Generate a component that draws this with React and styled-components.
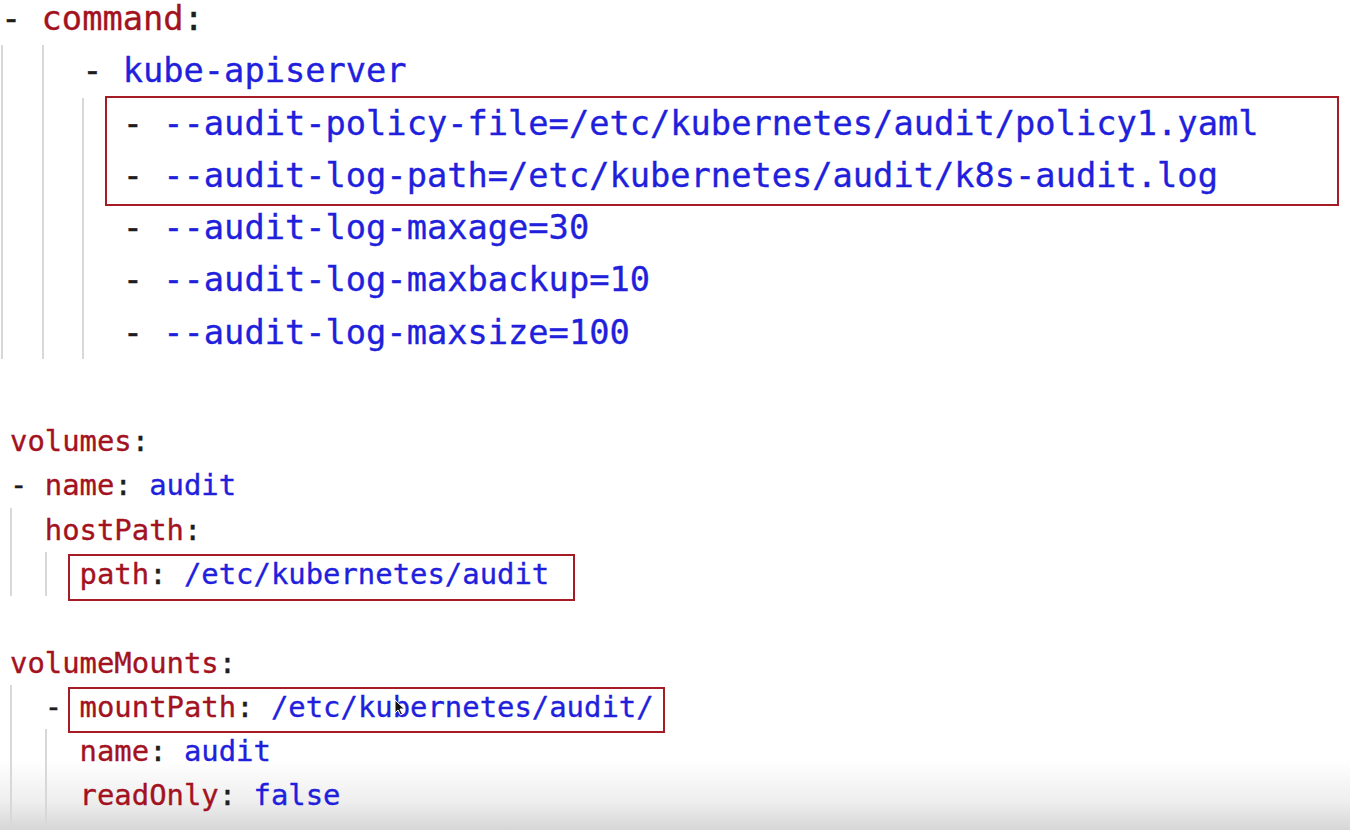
import React from "react";
import styled, { createGlobalStyle } from "styled-components";

const Global = createGlobalStyle`
  html, body { margin: 0; padding: 0; background: #ffffff; }
  #root { width: 1350px; height: 830px; }
`;

const Page = styled.div`
  position: relative;
  width: 1350px;
  height: 830px;
  overflow: hidden;
  background: #ffffff;
`;

const Block = styled.div`
  position: relative;
  z-index: 1;
  font-family: "DejaVu Sans Mono", "Liberation Mono", monospace;
  font-size: ${(p) => p.$size}px;
  line-height: ${(p) => p.$lh}px;
  padding-left: ${(p) => p.$pad}px;
  margin-top: ${(p) => p.$mt}px;
  white-space: pre;
  color: #222222;
  -webkit-text-stroke: 0.35px currentColor;
`;

const Line = styled.div`
  display: flex;
  align-items: stretch;
`;

const Indent = styled.span`
  display: inline-block;
  width: 2ch;
  flex: none;
  box-shadow: ${(p) => (p.$guide ? "inset 2px 0 0 #d8d8d8" : "none")};
`;

const Dash = styled.span`
  color: #1e1e1e;
`;

const Key = styled.span`
  color: #a3121f;
`;

const Val = styled.span`
  color: #1f1fdc;
`;

const Colon = styled.span`
  color: #1e1e1e;
`;

const Highlight = styled.div`
  position: relative;
  &::after {
    content: "";
    position: absolute;
    left: ${(p) => p.$left}px;
    width: ${(p) => p.$width}px;
    top: ${(p) => p.$top}px;
    bottom: ${(p) => p.$bottom}px;
    border: 2px solid #a51b26;
    box-sizing: border-box;
    pointer-events: none;
  }
`;

const Cursor = styled.svg`
  position: absolute;
  z-index: 2;
  left: 394px;
  top: 699px;
  width: 12px;
  height: 17px;
`;

const Fade = styled.div`
  position: absolute;
  z-index: 0;
  left: 0;
  right: 0;
  bottom: 0;
  height: 70px;
  pointer-events: none;
  background: linear-gradient(
    to bottom,
    rgba(255, 255, 255, 0) 0%,
    rgba(238, 238, 238, 1) 60%,
    rgba(214, 214, 214, 1) 100%
  );
`;

const Guides = ({ n }) =>
  Array.from({ length: n }).map((_, i) => <Indent key={i} $guide />);

const Row = ({ guides = 0, children }) => (
  <Line>
    <Guides n={guides} />
    <span>{children}</span>
  </Line>
);

const argRows = [
  "--audit-log-maxage=30",
  "--audit-log-maxbackup=10",
  "--audit-log-maxsize=100",
];

export default function App() {
  return (
    <Page>
      <Global />
      <Fade />
      <Block $size={33.7} $lh={52.3} $pad={1} $mt={-7}>
        <Row>
          <Dash>- </Dash>
          <Key>command</Key>
          <Colon>:</Colon>
        </Row>
        <Row guides={2}>
          <Dash>- </Dash>
          <Val>kube-apiserver</Val>
        </Row>
        <Highlight $left={104} $width={1234} $top={-2} $bottom={-4}>
          <Row guides={3}>
            <Dash>- </Dash>
            <Val>--audit-policy-file=/etc/kubernetes/audit/policy1.yaml</Val>
          </Row>
          <Row guides={3}>
            <Dash>- </Dash>
            <Val>--audit-log-path=/etc/kubernetes/audit/k8s-audit.log</Val>
          </Row>
        </Highlight>
        {argRows.map((a) => (
          <Row guides={3} key={a}>
            <Dash>- </Dash>
            <Val>{a}</Val>
          </Row>
        ))}
      </Block>

      <Block $size={28.9} $lh={44.3} $pad={10} $mt={60}>
        <Row>
          <Key>volumes</Key>
          <Colon>:</Colon>
        </Row>
        <Row>
          <Dash>- </Dash>
          <Key>name</Key>
          <Colon>: </Colon>
          <Val>audit</Val>
        </Row>
        <Row guides={1}>
          <Key>hostPath</Key>
          <Colon>:</Colon>
        </Row>
        <Highlight $left={58} $width={507} $top={2} $bottom={-5}>
          <Row guides={2}>
            <Key>path</Key>
            <Colon>: </Colon>
            <Val>/etc/kubernetes/audit</Val>
          </Row>
        </Highlight>
        <Row> </Row>
        <Row>
          <Key>volumeMounts</Key>
          <Colon>:</Colon>
        </Row>
        <Highlight $left={58} $width={597} $top={2} $bottom={-4}>
          <Row guides={1}>
            <Dash>- </Dash>
            <Key>mountPath</Key>
            <Colon>: </Colon>
            <Val>/etc/kubernetes/audit/</Val>
          </Row>
        </Highlight>
        <Row guides={2}>
          <Key>name</Key>
          <Colon>: </Colon>
          <Val>audit</Val>
        </Row>
        <Row guides={2}>
          <Key>readOnly</Key>
          <Colon>: </Colon>
          <Val>false</Val>
        </Row>
        <Row guides={2}> </Row>
      </Block>

      <Cursor viewBox="0 0 12 17">
        <path
          d="M1 1 L1 14 L4 11 L6.5 16 L8.5 15 L6 10 L10.5 10 Z"
          fill="#111"
          stroke="#fff"
          strokeWidth="1"
          strokeLinejoin="round"
        />
      </Cursor>
    </Page>
  );
}
